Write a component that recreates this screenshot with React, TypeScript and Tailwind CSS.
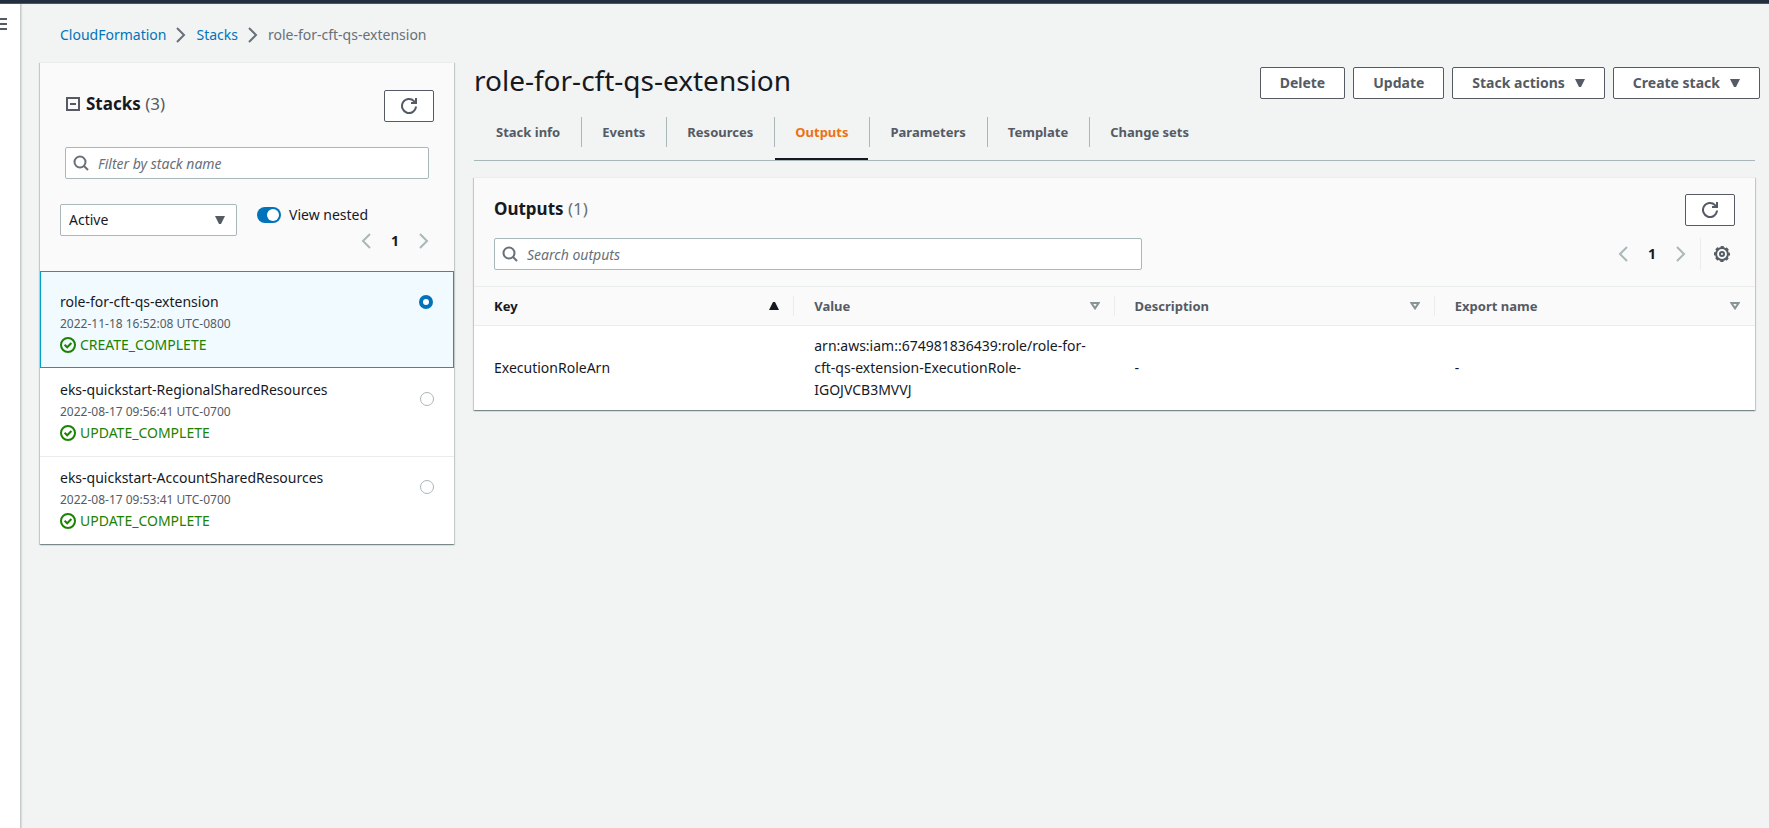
import { useState, type ReactNode } from "react";

type Stack = { name: string; date: string; status: string };

const stacks: Stack[] = [
  { name: "role-for-cft-qs-extension", date: "2022-11-18 16:52:08 UTC-0800", status: "CREATE_COMPLETE" },
  { name: "eks-quickstart-RegionalSharedResources", date: "2022-08-17 09:56:41 UTC-0700", status: "UPDATE_COMPLETE" },
  { name: "eks-quickstart-AccountSharedResources", date: "2022-08-17 09:53:41 UTC-0700", status: "UPDATE_COMPLETE" },
];

const tabs = ["Stack info", "Events", "Resources", "Outputs", "Parameters", "Template", "Change sets"];

const panel =
  "border-t border-[#eaeded] bg-white shadow-[0_1px_1px_0_rgba(0,28,36,0.3),1px_1px_1px_0_rgba(0,28,36,0.15),-1px_1px_1px_0_rgba(0,28,36,0.15)]";

function SearchIcon() {
  return (
    <svg className="pointer-events-none absolute left-2 top-2 size-4" viewBox="0 0 16 16" fill="none" stroke="#687078" strokeWidth="2" aria-hidden="true">
      <circle cx="7" cy="7" r="5.5" />
      <path d="M11 11l4 4" />
    </svg>
  );
}

function RefreshIcon() {
  return (
    <svg className="size-4" viewBox="0 0 16 16" fill="none" stroke="#545b64" strokeWidth="2" aria-hidden="true">
      <path d="M15 8.500A7 7 0 1 1 13 3.100L14.500 4.600" />
      <path d="M10 5h5V0" />
    </svg>
  );
}

function ChevronIcon({ dir, className }: { dir: "left" | "right"; className: string }) {
  return (
    <svg className={className} viewBox="0 0 16 16" fill="none" stroke="currentColor" strokeWidth="2" aria-hidden="true">
      <path d={dir === "left" ? "M12 1L5 8l7 7" : "M4 1l7 7-7 7"} />
    </svg>
  );
}

function Caret({ kind = "down" }: { kind?: "down" | "up" | "open" }) {
  if (kind === "open")
    return (
      <svg className="h-2 w-[10px]" viewBox="0 0 10 8" fill="none" stroke="#879596" strokeWidth="2" aria-hidden="true">
        <path d="M1.4 1h7.2L5 6.4z" />
      </svg>
    );
  return (
    <svg className="h-2 w-[10px]" viewBox="0 0 10 8" fill="currentColor" aria-hidden="true">
      <path d={kind === "up" ? "M0 8h10L6 0H4z" : "M0 0h10L6 8H4z"} />
    </svg>
  );
}

function CheckCircle() {
  return (
    <svg className="size-4" viewBox="0 0 16 16" fill="none" stroke="currentColor" strokeWidth="2" aria-hidden="true">
      <circle cx="8" cy="8" r="7" />
      <path d="M4.600 7.800L7.200 10.300 11.400 6" />
    </svg>
  );
}

function GearIcon() {
  return (
    <svg className="size-4" viewBox="0 0 16 16" fill="none" stroke="#545b64" strokeWidth="2" aria-hidden="true">
      <circle cx="8" cy="8" r="5.900" />
      <circle cx="8" cy="8" r="7" strokeDasharray="3.200 2.298" strokeDashoffset="1.600" />
      <circle cx="8" cy="8" r="2" />
    </svg>
  );
}

function RefreshButton({ label }: { label: string }) {
  return (
    <button aria-label={label} className="flex h-8 w-[50px] items-center justify-center rounded-xs border border-[#545b64] bg-white">
      <RefreshIcon />
    </button>
  );
}

function ActionButton({ children, menu }: { children: ReactNode; menu?: boolean }) {
  return (
    <button className="flex h-8 items-center gap-[10px] whitespace-nowrap rounded-xs border border-[#545b64] bg-white px-[19px] text-sm font-bold text-[#545b64]">
      {children}
      {menu && <Caret />}
    </button>
  );
}

function SearchField({ label }: { label: string }) {
  return (
    <div className="relative">
      <SearchIcon />
      <input
        type="search"
        aria-label={label}
        placeholder={label}
        className="h-8 w-full rounded-xs border border-[#aab7b8] bg-white pl-8 pr-2 text-sm outline-none placeholder:italic placeholder:text-[#687078]"
      />
    </div>
  );
}

function Pagination() {
  return (
    <nav aria-label="Pages" className="flex items-center gap-[17px]">
      <button aria-label="Previous page" className="text-[#aab7b8]">
        <ChevronIcon dir="left" className="size-4" />
      </button>
      <button className="w-2 text-sm font-bold">1</button>
      <button aria-label="Next page" className="text-[#aab7b8]">
        <ChevronIcon dir="right" className="size-4" />
      </button>
    </nav>
  );
}

function StackRow({ stack, selected, onSelect }: { stack: Stack; selected: boolean; onSelect: () => void }) {
  return (
    <label
      className={
        selected
          ? "mb-px flex items-start justify-between border border-[#00a1c9] bg-[#f1faff] pb-3 pl-[19px] pr-5 pt-[19px]"
          : "flex items-start justify-between border-b border-[#eaeded] pb-[13px] pl-5 pr-5 pt-[10px] last:border-b-0"
      }
    >
      <span className="block">
        <span className="block text-sm leading-[22px]">{stack.name}</span>
        <span className="block text-xs leading-[22px] text-[#545b64]">{stack.date}</span>
        <span className="flex items-center gap-1 text-sm leading-5 text-[#1d8102]">
          <CheckCircle />
          {stack.status}
        </span>
      </span>
      <input
        type="radio"
        name="stack"
        checked={selected}
        onChange={onSelect}
        className={
          selected
            ? "mt-1 size-[14px] appearance-none rounded-full border-4 border-[#0073bb] bg-white"
            : "mt-[13px] size-[14px] appearance-none rounded-full border border-[#aab7b8] bg-white"
        }
      />
    </label>
  );
}

export default function App() {
  const [selected, setSelected] = useState(0);
  const [tab, setTab] = useState("Outputs");
  const [nested, setNested] = useState(true);

  return (
    <div className="flex min-h-screen flex-col bg-[#f2f3f3] font-['Noto_Sans',sans-serif] text-sm text-[#16191f]">
      <header className="h-1 border-b border-[#4b5563] bg-[#232f3e]" />
      <div className="flex flex-1">
        <div className="w-[21px] shrink-0 border-r border-[#c5cccc] bg-white pt-[14px] shadow-[1px_0_1px_0_rgba(0,28,36,0.1)]">
          <button aria-label="Open navigation" className="block">
            <svg className="h-3 w-[7px]" viewBox="0 0 7 12" fill="#545b64" aria-hidden="true">
              <path d="M0 0h7v2H0zM0 5h7v2H0zM0 10h7v2H0z" />
            </svg>
          </button>
        </div>

        <div className="min-w-0 flex-1 pl-[19px] pr-[9px]">
          <nav aria-label="Breadcrumb" className="flex h-[58px] items-center gap-[7px] pl-5 pt-1">
            <a href="#cloudformation" className="text-[#0073bb]">CloudFormation</a>
            <ChevronIcon dir="right" className="size-4 text-[#687078]" />
            <a href="#stacks" className="text-[#0073bb]">Stacks</a>
            <ChevronIcon dir="right" className="size-4 text-[#687078]" />
            <span className="text-[#687078]">role-for-cft-qs-extension</span>
          </nav>

          <div className="flex items-start gap-5">
            <aside className={`w-[414px] shrink-0 ${panel}`}>
              <div className="bg-[#fafafa] pb-[13px]">
                <div className="flex items-start justify-between px-5 pt-[27px]">
                  <h2 className="flex items-center gap-[6px] pl-[6px] text-[17px] leading-7">
                    <svg className="size-[14px]" viewBox="0 0 14 14" fill="none" stroke="#545b64" strokeWidth="2" aria-hidden="true">
                      <path d="M1 1h12v12H1zM4 7h6" />
                    </svg>
                    <span className="font-bold">
                      Stacks <span className="font-normal text-[#545b64]">(3)</span>
                    </span>
                  </h2>
                  <RefreshButton label="Refresh stacks" />
                </div>
                <div className="px-[25px] pt-[25px]">
                  <SearchField label="Filter by stack name" />
                </div>
                <div className="flex gap-5 pl-5 pr-5 pt-[25px]">
                  <div className="relative h-8 w-[177px]">
                    <select
                      aria-label="Stack status"
                      className="h-8 w-full appearance-none rounded-xs border border-[#aab7b8] bg-white px-2 text-sm"
                    >
                      <option>Active</option>
                      <option>Deleted</option>
                    </select>
                    <span className="pointer-events-none absolute right-3 top-3 text-[#545b64]">
                      <Caret />
                    </span>
                  </div>
                  <div className="flex flex-1 flex-col">
                    <label className="flex h-[22px] items-center gap-2">
                      <input
                        type="checkbox"
                        checked={nested}
                        onChange={(e) => setNested(e.target.checked)}
                        className="peer sr-only"
                      />
                      <span
                        className={
                          nested
                            ? "flex h-4 w-6 items-center justify-end rounded-full bg-[#0073bb] px-[2px]"
                            : "flex h-4 w-6 items-center rounded-full bg-[#687078] px-[2px]"
                        }
                      >
                        <span className="size-3 rounded-full bg-white" />
                      </span>
                      View nested
                    </label>
                    <div className="flex h-8 items-start justify-end pr-[2px] pt-[5px]">
                      <Pagination />
                    </div>
                  </div>
                </div>
              </div>
              <div>
                {stacks.map((s, i) => (
                  <StackRow key={s.name} stack={s} selected={i === selected} onSelect={() => setSelected(i)} />
                ))}
              </div>
            </aside>

            <main className="min-w-0 flex-1">
              <div className="flex items-end justify-between pt-[1px]">
                <h1 className="pb-[2px] text-[28px] leading-[34px]">role-for-cft-qs-extension</h1>
                <div className="flex gap-2">
                  <ActionButton>Delete</ActionButton>
                  <ActionButton>Update</ActionButton>
                  <ActionButton menu>Stack actions</ActionButton>
                  <ActionButton menu>Create stack</ActionButton>
                </div>
              </div>

              <div className="pr-[5px]">
                <div role="tablist" className="flex h-[62px] border-b border-[#aab7b8] pl-[2px] pt-[18px]">
                  {tabs.map((t) => (
                    <div key={t} className="flex h-[30px] border-r border-[#aab7b8] pr-[1px] last:border-r-0">
                      <button
                        role="tab"
                        aria-selected={t === tab}
                        onClick={() => setTab(t)}
                        className={
                          t === tab
                            ? "h-[43px] whitespace-nowrap border-b-2 border-[#16191f] px-5 pb-[11px] text-[13px] font-bold text-[#ec7211]"
                            : "h-[43px] whitespace-nowrap border-b-2 border-transparent px-5 pb-[11px] text-[13px] font-bold text-[#545b64]"
                        }
                      >
                        {t}
                      </button>
                    </div>
                  ))}
                </div>

                <section className={`mt-4 ${panel}`}>
                  <div className="bg-[#fafafa] px-5 pb-4 pt-4">
                    <div className="flex items-start justify-between">
                      <h2 className="text-[17px] font-bold leading-[30px]">
                        Outputs <span className="font-normal text-[#687078]">(1)</span>
                      </h2>
                      <RefreshButton label="Refresh outputs" />
                    </div>
                    <div className="flex justify-between pt-3">
                      <div className="w-[648px] min-w-0">
                        <SearchField label="Search outputs" />
                      </div>
                      <div className="flex h-8 pr-[5px]">
                        <Pagination />
                        <div className="ml-[11px] flex items-center border-l border-[#eaeded] pl-[13px]">
                          <button aria-label="Preferences">
                            <GearIcon />
                          </button>
                        </div>
                      </div>
                    </div>
                  </div>
                  <table className="w-full table-fixed text-left">
                    <thead className="border-y border-[#eaeded] bg-[#fafafa]">
                      <tr>
                        {["Key", "Value", "Description", "Export name"].map((h, i) => (
                          <th key={h} className="h-[39px] p-0 text-[13px] font-bold">
                            <div
                              className={
                                i === 3
                                  ? "flex h-5 items-center justify-between pl-5 pr-[15px] text-[#545b64]"
                                  : i === 0
                                    ? "flex h-5 items-center justify-between border-r border-[#eaeded] pl-5 pr-[14px]"
                                    : "flex h-5 items-center justify-between border-r border-[#eaeded] pl-5 pr-[14px] text-[#545b64]"
                              }
                            >
                              {h}
                              <Caret kind={i === 0 ? "up" : "open"} />
                            </div>
                          </th>
                        ))}
                      </tr>
                    </thead>
                    <tbody>
                      <tr className="leading-[22px]">
                        <td className="px-5 py-[9px]">ExecutionRoleArn</td>
                        <td className="px-5 py-[9px]">arn:aws:iam::674981836439:role/role-for-cft-qs-extension-ExecutionRole-IGOJVCB3MVVJ</td>
                        <td className="px-5 py-[9px]">-</td>
                        <td className="px-5 py-[9px]">-</td>
                      </tr>
                    </tbody>
                  </table>
                </section>
              </div>
            </main>
          </div>
        </div>
      </div>
    </div>
  );
}
